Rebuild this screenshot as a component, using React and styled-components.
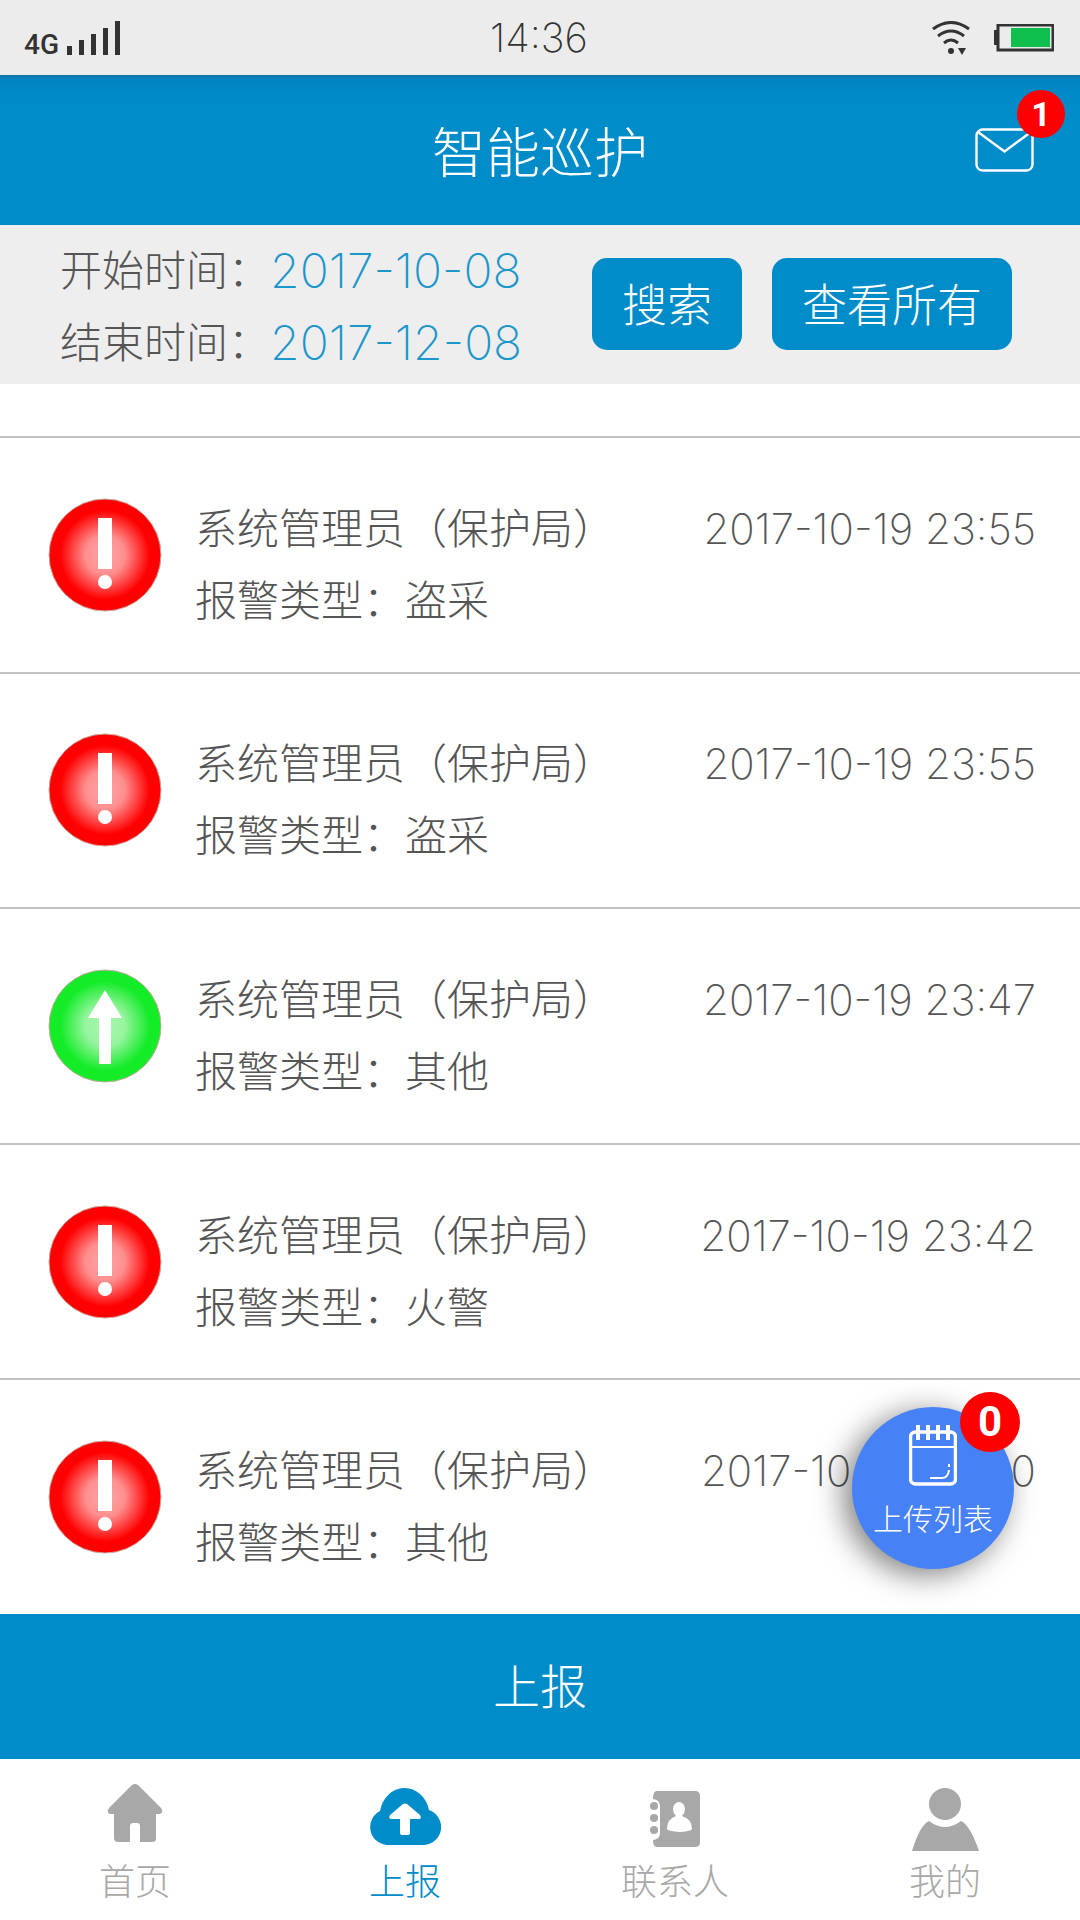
import React, { useState } from 'react';
import styled, { createGlobalStyle } from 'styled-components';

const GlobalStyle = createGlobalStyle`
  * {
    box-sizing: border-box;
  }
  body {
    margin: 0;
    background: #fff;
    color: #555;
    font-family: Inter, "Noto Sans CJK SC", sans-serif;
    font-weight: 300;
  }
  button, input {
    font: inherit;
    border: none;
    padding: 0;
    background: none;
  }
`
const Page = styled.div`
  display: flex;
  flex-direction: column;
  min-height: 100vh;
`
const StatusBar = styled.div`
  display: grid;
  grid-template-columns: 1fr auto 1fr;
  align-items: center;
  height: 75px;
  padding: 0 26px 0 24px;
  background: #ececec;
  color: #333;
`
const Signal = styled.div`
  display: flex;
  align-items: flex-end;
  gap: 8px;
`
const Network = styled.span`
  font-family: Roboto, sans-serif;
  font-size: 28px;
  font-weight: 500;
  line-height: 20px;
`
const Clock = styled.span`
  font-size: 40px;
  font-weight: 200;
  line-height: 40px;
`
const StatusIcons = styled.div`
  display: flex;
  justify-content: flex-end;
  align-items: center;
  gap: 24px;
`
const Header = styled.header`
  display: grid;
  grid-template-columns: 1fr auto 1fr;
  align-items: center;
  height: 150px;
  padding: 0 46px;
  background: linear-gradient(#1a6f98 0, #0083c0 3px, #008cc9 24px);
  color: #fff;
`
const Title = styled.h1`
  grid-column: 2;
  margin: 0;
  padding-top: 8px;
  font-size: 54px;
  font-weight: 300;
  line-height: 72px;
`
const MailButton = styled.button`
  position: relative;
  justify-self: end;
  height: 44px;
  color: #fff;

  svg {
    display: block;
  }
`
const Badge = styled.span`
  position: absolute;
  top: ${(props) => props.$top};
  right: ${(props) => props.$right};
  width: ${(props) => props.$size};
  height: ${(props) => props.$size};
  border-radius: 50%;
  background: #f00;
  color: #fff;
  font-family: Roboto, sans-serif;
  font-size: ${(props) => props.$font};
  font-weight: 700;
  line-height: ${(props) => props.$size};
  text-align: center;
`
const FilterBar = styled.form`
  display: flex;
  align-items: center;
  justify-content: space-between;
  padding: 3px 68px 5px 60px;
  background: #eee;
`
const DateFields = styled.div`
  display: flex;
  flex-direction: column;
  padding-top: 7px;
`
const DateField = styled.label`
  display: flex;
  align-items: center;
  font-size: 42px;
  line-height: 72px;
`
const DateInput = styled.input`
  width: 272px;
  height: 72px;
  color: #1c96cb;
  font-size: 48px;
  font-weight: 200;
`
const FilterActions = styled.div`
  display: flex;
  gap: 30px;
`
const FilterButton = styled.button`
  height: 92px;
  padding: 0 30px 2px;
  border-radius: 15px;
  background: #008cc9;
  color: #fff;
  font-size: 45px;
`
const ListArea = styled.main`
  position: relative;
  display: flex;
  flex: 1;
  flex-direction: column;
  padding-top: 52px;
`
const AlarmList = styled.ul`
  display: flex;
  flex: 1;
  flex-direction: column;
  margin: 0;
  padding: 0;
  list-style: none;
`
const AlarmRow = styled.li`
  display: flex;
  flex: 1 0 auto;
  align-items: center;
  gap: 33px;
  padding: 24px 44px 24px 48px;
  border-top: 2px solid #c2c2c2;

  > svg {
    flex: none;
  }
`
const AlarmText = styled.div`
  flex: 1;
  padding-top: 20px;
  font-size: 42px;
  line-height: 72px;
`
const AlarmTop = styled.div`
  display: flex;
  justify-content: space-between;
`
const AlarmTime = styled.time`
  font-weight: 200;
`
const UploadButton = styled.button`
  position: absolute;
  right: 66px;
  bottom: 45px;
  display: flex;
  flex-direction: column;
  align-items: center;
  width: 162px;
  height: 162px;
  padding-top: 18px;
  border-radius: 50%;
  background: #4682f6;
  box-shadow: -8px 6px 30px rgba(0, 0, 0, 0.5);
  color: #fff;
  font-size: 30px;
  line-height: 66px;
`
const ReportButton = styled.button`
  height: 145px;
  padding-bottom: 6px;
  background: #008cc9;
  color: #fff;
  font-size: 47px;
`
const TabBar = styled.nav`
  display: grid;
  grid-template-columns: repeat(4, 1fr);
  padding: 23px 0 10px;
`
const Tab = styled.a`
  display: flex;
  flex-direction: column;
  align-items: center;
  color: ${(props) => (props.$active ? '#008cc9' : '#a8a8a8')};
  font-size: 36px;
  line-height: 56px;
  text-decoration: none;
`

const alarms = [
  { id: 1, type: '盗采', time: '2017-10-19 23:55' },
  { id: 2, type: '盗采', time: '2017-10-19 23:55' },
  { id: 3, type: '其他', time: '2017-10-19 23:47', sent: true },
  { id: 4, type: '火警', time: '2017-10-19 23:42' },
  { id: 5, type: '其他', time: '2017-10-19 23:40' },
];

const SignalIcon = () => (
  <svg width="54" height="34" fill="#333">
    <path d="M0 25h5v9h-5zM12 19h5v15h-5zM24 13h5v21h-5zM36 7h5v27h-5zM48 0h5v34h-5z" />
  </svg>
);

const WifiIcon = () => (
  <svg width="38" height="34" fill="none" stroke="#333" strokeWidth="3">
    <path d="M1 8Q19 -5 37 8M6 15Q19 5 32 15M12 22Q19 16 26 22" />
    <circle cx="19" cy="30" r="3" fill="#333" stroke="none" />
    <path d="M26 27h8l-4 7z" fill="#333" stroke="none" />
  </svg>
);

const BatteryIcon = () => (
  <svg width="60" height="28">
    <rect x="0" y="6" width="5" height="15" fill="#333" />
    <rect x="4" y="1" width="55" height="25" fill="none" stroke="#333" strokeWidth="3" />
    <rect x="17" y="4" width="39" height="19" fill="#0fc04e" />
  </svg>
);

const MailIcon = () => (
  <svg width="59" height="44" fill="none" stroke="currentColor" strokeWidth="2.4">
    <rect x="1.5" y="1.5" width="56" height="41" rx="6" />
    <path d="M3 4l26.500 19.500L56 4" />
  </svg>
);

const AlarmIcon = ({ sent }) => {
  const color = sent ? '#14ec28' : '#ff0000';
  const id = sent ? 'glowSent' : 'glowAlarm';
  return (
    <svg width="114" height="114" viewBox="0 0 114 114">
      <defs>
        <radialGradient id={id}>
          <stop offset="0" stopColor={sent ? '#a8f8ae' : '#ffa4a4'} />
          <stop offset="0.35" stopColor={sent ? '#98f4a0' : '#ff8f8f'} />
          <stop offset="0.8" stopColor={color} />
          <stop offset="1" stopColor={color} />
        </radialGradient>
      </defs>
      <circle cx="57" cy="57" r="56" fill={`url(#${id})`} stroke="#c9a9a0" strokeWidth="1" />
      {sent ? (
        <path d="M57 21L74 49H63V95H51V49H40z" fill="#fff" />
      ) : (
        <g fill="#fff">
          <rect x="50" y="20" width="14" height="51" />
          <circle cx="57" cy="84" r="7" />
        </g>
      )}
    </svg>
  );
};

const NotebookIcon = () => (
  <svg width="48" height="61" fill="none" stroke="currentColor">
    <rect x="1.500" y="7" width="45" height="52" rx="5" strokeWidth="3.500" />
    <path d="M9 0v15M19 0v15M29 0v15M39 0v15" strokeWidth="4" />
    <path d="M2 22h44" strokeWidth="2" />
    <path d="M21 53h12q6 0 7-8" strokeWidth="2" />
    <path d="M40 42v-3" strokeWidth="2" />
  </svg>
);

const HomeIcon = () => (
  <svg width="72" height="72" fill="currentColor">
    <path d="M33 3q3-2 6 0L62 26q3 4-1 6H57V57q0 3-4 3H41V44q0-3-3-3H34q-3 0-3 3V60H19q-4 0-4-4V32H11q-4-2-1-6z" />
  </svg>
);

const CloudIcon = () => (
  <svg width="72" height="72">
    <path d="M18 63A18 18 0 0 1 11 29A25 28 0 0 1 60 28A18 18 0 0 1 55 63z" fill="currentColor" />
    <path d="M34 22q2-1 4 0L51 33q2 4-1 4H41V51q0 2-3 2H34q-3 0-3-2V37H22q-3-1-1-4z" fill="#fff" />
  </svg>
);

const ContactsIcon = () => (
  <svg width="72" height="72" fill="currentColor">
    <path d="M18 9H56q5 0 5 5V60q0 5-5 5H18q-4 0-4-7q7-1 7-7V24q0-6-7-7q0-8 4-8z" />
    <circle cx="15" cy="24" r="4" />
    <circle cx="15" cy="36" r="4" />
    <circle cx="15" cy="48" r="4" />
    <path d="M40 20a6 7 0 0 1 6 7q0 4-3 7q10 3 10 13q0 2-12 3q-13-1-13-3q0-10 9-13q-3-3-3-7a6 7 0 0 1 6-7z" fill="#fff" />
  </svg>
);

const PersonIcon = () => (
  <svg width="72" height="72" fill="currentColor">
    <circle cx="36" cy="22" r="16" />
    <path d="M20 39q16 12 32 0q9 4 18 30H3q8-26 17-30z" />
  </svg>
);

const tabs = [
  { name: '首页', Icon: HomeIcon },
  { name: '上报', Icon: CloudIcon },
  { name: '联系人', Icon: ContactsIcon },
  { name: '我的', Icon: PersonIcon },
];

function App() {
  const [start, setStart] = useState('2017-10-08');
  const [end, setEnd] = useState('2017-12-08');
  const [tab, setTab] = useState('上报');

  return (
    <Page>
      <GlobalStyle />
      <StatusBar>
        <Signal>
          <Network>4G</Network>
          <SignalIcon />
        </Signal>
        <Clock>14:36</Clock>
        <StatusIcons>
          <WifiIcon />
          <BatteryIcon />
        </StatusIcons>
      </StatusBar>
      <Header>
        <Title>智能巡护</Title>
        <MailButton type="button" aria-label="消息">
          <MailIcon />
          <Badge $top="-38px" $right="-31px" $size="48px" $font="34px">1</Badge>
        </MailButton>
      </Header>
      <FilterBar onSubmit={(e) => e.preventDefault()}>
        <DateFields>
          <DateField>
            开始时间：
            <DateInput type="text" value={start} onChange={(e) => setStart(e.target.value)} />
          </DateField>
          <DateField>
            结束时间：
            <DateInput type="text" value={end} onChange={(e) => setEnd(e.target.value)} />
          </DateField>
        </DateFields>
        <FilterActions>
          <FilterButton type="submit">搜索</FilterButton>
          <FilterButton type="button">查看所有</FilterButton>
        </FilterActions>
      </FilterBar>
      <ListArea>
        <AlarmList>
          {alarms.map((alarm) => (
            <AlarmRow key={alarm.id}>
              <AlarmIcon sent={alarm.sent} />
              <AlarmText>
                <AlarmTop>
                  <span>系统管理员（保护局）</span>
                  <AlarmTime>{alarm.time}</AlarmTime>
                </AlarmTop>
                <div>报警类型：{alarm.type}</div>
              </AlarmText>
            </AlarmRow>
          ))}
        </AlarmList>
        <UploadButton type="button">
          <NotebookIcon />
          上传列表
          <Badge $top="-15px" $right="-6px" $size="60px" $font="42px">0</Badge>
        </UploadButton>
      </ListArea>
      <ReportButton type="button">上报</ReportButton>
      <TabBar>
        {tabs.map(({ name, Icon }) => (
          <Tab key={name} href="#" $active={tab === name} onClick={() => setTab(name)}>
            <Icon />
            {name}
          </Tab>
        ))}
      </TabBar>
    </Page>
  );
}

export default App;
